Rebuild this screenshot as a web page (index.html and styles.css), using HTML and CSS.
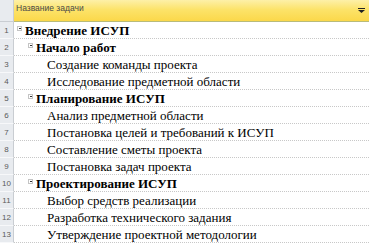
FILE: index.html
```html
<!DOCTYPE html>
<html>
<head>
<meta charset="utf-8">
<link rel="stylesheet" href="styles.css">
</head>
<body>
<div class="sheet">
  <div class="head">
    <div class="num-head"></div>
    <div class="col-head">
      <span class="col-title">Название задачи</span>
      <svg class="drop" width="7" height="5" viewBox="0 0 7 5"><rect x="0" y="0" width="7" height="1" fill="#222"/><path d="M0 2 H7 L3.5 5 Z" fill="#222"/></svg>
    </div>
  </div>
  <div class="row"><div class="num">1</div><div class="cell l1"><span class="box"></span><span class="t b">Внедрение ИСУП</span></div></div>
  <div class="row"><div class="num">2</div><div class="cell l2"><span class="box"></span><span class="t b">Начало работ</span></div></div>
  <div class="row"><div class="num">3</div><div class="cell l3"><span class="t">Создание команды проекта</span></div></div>
  <div class="row"><div class="num">4</div><div class="cell l3"><span class="t">Исследование предметной области</span></div></div>
  <div class="row"><div class="num">5</div><div class="cell l2"><span class="box"></span><span class="t b">Планирование ИСУП</span></div></div>
  <div class="row"><div class="num">6</div><div class="cell l3"><span class="t">Анализ предметной области</span></div></div>
  <div class="row"><div class="num">7</div><div class="cell l3"><span class="t">Постановка целей и требований к ИСУП</span></div></div>
  <div class="row"><div class="num">8</div><div class="cell l3"><span class="t">Составление сметы проекта</span></div></div>
  <div class="row"><div class="num">9</div><div class="cell l3"><span class="t">Постановка задач проекта</span></div></div>
  <div class="row"><div class="num">10</div><div class="cell l2"><span class="box"></span><span class="t b">Проектирование ИСУП</span></div></div>
  <div class="row"><div class="num">11</div><div class="cell l3"><span class="t">Выбор средств реализации</span></div></div>
  <div class="row"><div class="num">12</div><div class="cell l3"><span class="t">Разработка технического задания</span></div></div>
  <div class="row"><div class="num">13</div><div class="cell l3"><span class="t">Утверждение проектной методологии</span></div></div>
</div>
</body>
</html>
```
FILE: styles.css
```css
html, body {
  margin: 0;
  padding: 0;
  background: #fff;
}
.sheet {
  width: 369px;
  height: 243px;
  overflow: hidden;
}
.head {
  display: flex;
  height: 22px;
}
.num-head {
  width: 13px;
  flex: none;
  background: #e8ebef;
  border-right: 1px solid #c9cdd2;
  border-bottom: 1px solid #c9cdd2;
}
.col-head {
  flex: 1;
  display: flex;
  align-items: center;
  justify-content: space-between;
  padding: 0 4px 0 2px;
  background: linear-gradient(#fdf0a8 0%, #fce36a 45%, #fbd84a 100%);
  border-bottom: 1px solid #b8bb7a;
  box-sizing: border-box;
}
.col-title {
  font-family: "Liberation Sans", Arial, sans-serif;
  font-size: 8.5px;
  color: #4a4a4a;
  margin-top: -6px;
}
.drop {
  margin-top: -1px;
}
.row {
  display: flex;
  height: 17px;
}
.num {
  width: 13px;
  flex: none;
  background: #e8ebef;
  border-right: 1px solid #c9cdd2;
  border-bottom: 1px solid #f7f8fa;
  height: 16px;
  font-family: "Liberation Sans", Arial, sans-serif;
  font-size: 8px;
  color: #5a5a5a;
  text-align: center;
  line-height: 17px;
}
.cell {
  flex: 1;
  display: flex;
  align-items: flex-start;
  border-bottom: 1px dotted #c8c8c8;
  height: 16px;
  font-family: "Liberation Serif", "Times New Roman", serif;
  font-size: 13px;
  color: #000;
  white-space: nowrap;
}
.t {
  line-height: 16px;
  margin-top: 1px;
}
.b {
  font-weight: bold;
}
.box {
  width: 5px;
  height: 5px;
  border: 1px solid #c4c4c4;
  box-sizing: border-box;
  position: relative;
  margin-top: 4px;
  margin-right: 3px;
  flex: none;
}
.box::after {
  content: "";
  position: absolute;
  left: 1px;
  top: 1px;
  width: 1px;
  height: 1px;
  background: #333;
  box-shadow: 1px 0 0 #333;
}
.l1 { padding-left: 3px; }
.l2 { padding-left: 14px; }
.l3 { padding-left: 33px; }
```
